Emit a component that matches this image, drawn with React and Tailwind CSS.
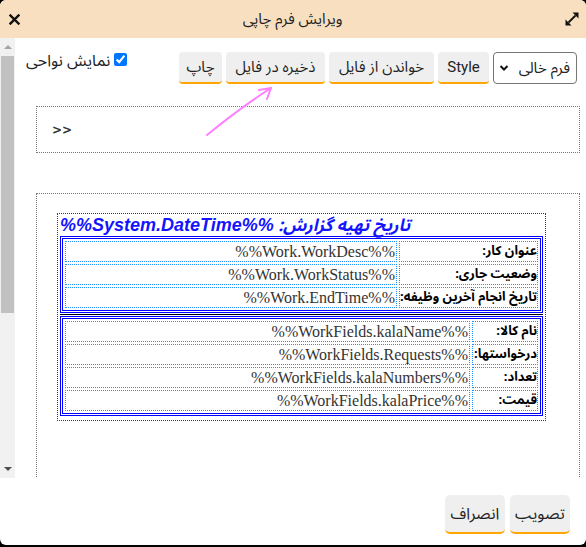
import React from "react";

const fa = { fontFamily: '"Noto Sans Arabic", "Vazirmatn", "DejaVu Sans", sans-serif' };
const serif = { fontFamily: '"Liberation Serif", "DejaVu Serif", serif' };

function Btn({ children, className = "" }) {
  return (
    <div
      className={`h-[32px] px-[9px] flex items-center justify-center bg-[#efefef] rounded-[4px] border-b-[2px] border-[#ffa500] text-[15px] text-[#222] whitespace-nowrap ${className}`}
      style={fa}
    >
      {children}
    </div>
  );
}

function Row({ label, value, labelW }) {
  return (
    <tr>
      <td
        className="border border-dotted border-[#1e90ff] px-0 h-[21px] text-[13px] font-bold text-black whitespace-nowrap leading-none"
        style={{ ...fa, width: labelW }}
      >
        {label}
      </td>
      <td
        className="border border-dotted border-[#1e90ff] px-[1px] h-[21px] text-[16px] text-[#333] text-right leading-none"
        style={serif}
      >
        {value}
      </td>
    </tr>
  );
}

function DataTable({ rows, labelW }) {
  return (
    <div className="border-[3px] border-double border-[#0000ff] p-0">
      <table className="w-full border-separate border-spacing-[2px]">
        <tbody>
          {rows.map((r, i) => (
            <Row key={i} label={r[0]} value={r[1]} labelW={labelW} />
          ))}
        </tbody>
      </table>
    </div>
  );
}

export default function App() {
  return (
    <div className="w-[586px] h-[547px] bg-black overflow-hidden">
      <div className="relative w-[586px] h-[545px] bg-white rounded-[6px] overflow-hidden flex flex-col">
        {/* title bar */}
        <div className="h-[38px] shrink-0 bg-[#f7dfc0] flex items-center justify-between pl-[9px] pr-[7px]">
          <svg width="11" height="11" viewBox="0 0 11 11">
            <path d="M1.5 1.5 L9.5 9.5 M9.5 1.5 L1.5 9.5" stroke="#111" strokeWidth="2.4" strokeLinecap="square" />
          </svg>
          <div className="text-[15px] text-[#222]" style={fa} dir="rtl">
            ویرایش فرم چاپی
          </div>
          <svg width="14" height="14" viewBox="0 0 14 14">
            <path d="M3.5 10.5 L10.5 3.5" stroke="#111" strokeWidth="1.8" />
            <path d="M13.5 0.5 L13.5 6.5 L7.5 0.5 Z" fill="#111" />
            <path d="M0.5 13.5 L0.5 7.5 L6.5 13.5 Z" fill="#111" />
          </svg>
        </div>

        {/* body */}
        <div className="h-[440px] shrink-0 flex">
          {/* scrollbar */}
          <div className="w-[15px] shrink-0 bg-[#f1f1f1] flex flex-col items-center">
            <div className="h-[18px] flex items-center justify-center">
              <div className="w-0 h-0 border-l-[4px] border-r-[4px] border-b-[4px] border-l-transparent border-r-transparent border-b-[#a3a3a3]" />
            </div>
            <div className="w-[13px] h-[257px] bg-[#c1c1c1]" />
            <div className="flex-1" />
            <div className="h-[18px] flex items-center justify-center">
              <div className="w-0 h-0 border-l-[4px] border-r-[4px] border-t-[4px] border-l-transparent border-r-transparent border-t-[#505050]" />
            </div>
          </div>

          {/* content */}
          <div className="flex-1 overflow-hidden" dir="rtl">
            <div className="flex justify-between items-start pt-[14px] pr-[9px] pl-[11px]">
              <div className="flex gap-[4px]">
                <div
                  className="h-[32px] w-[84px] border border-[#767676] rounded-[4px] flex items-center justify-between pr-[6px] pl-[5px] text-[15px] text-[#222]"
                  style={fa}
                >
                  <span>فرم خالی</span>
                  <svg width="10" height="8" viewBox="0 0 10 8">
                    <path d="M1.5 2 L5 5.5 L8.5 2" stroke="#111" strokeWidth="2" fill="none" />
                  </svg>
                </div>
                <Btn className="w-[51px]">
                  <span style={{ fontFamily: '"Roboto", "Liberation Sans", sans-serif' }} className="text-[15px]">
                    Style
                  </span>
                </Btn>
                <Btn className="w-[105px]">خواندن از فایل</Btn>
                <Btn className="w-[99px]">ذخیره در فایل</Btn>
                <Btn className="w-[43px]">چاپ</Btn>
              </div>
              <label className="flex items-start gap-[4px] text-[16px] text-[#222] -mt-[1px]" style={fa}>
                <input type="checkbox" defaultChecked className="w-[13px] h-[13px] mt-[2px] accent-[#0075ff]" />
                <span className="leading-[18px] mt-[1px]">نمایش نواحی</span>
              </label>
            </div>

            {/* box 1 */}
            <div className="mt-[22px] mr-[6px] ml-[21px] h-[47px] border border-dotted border-[#777] flex items-center px-[15px]" dir="ltr">
              <span className="text-[12px] text-[#333] font-bold" style={{ fontFamily: '"DejaVu Sans", sans-serif' }}>
                &gt;&gt;
              </span>
            </div>

            {/* box 2 */}
            <div className="mt-[40px] mr-[6px] ml-[21px] h-[320px] border border-dotted border-[#777] pt-[19px] pl-[20px] pr-[33px]">
              <div className="border border-dotted border-[#006400] px-[2px] pt-[1px] pb-[4px]">
                <div className="flex justify-end">
                  <div
                    className="text-[17px] font-bold italic text-[#1414ff] leading-[20px] whitespace-nowrap"
                    style={{ fontFamily: '"DejaVu Sans", "Liberation Sans", sans-serif' }}
                  >
                    <span style={fa}>تاریخ تهیه گزارش: </span>
                    <span style={{ fontFamily: '"Liberation Sans", sans-serif' }} className="text-[18px]">%%System.DateTime%%</span>
                  </div>
                </div>
                <DataTable
                  labelW="136px"
                  rows={[
                    ["عنوان کار:", "%%Work.WorkDesc%%"],
                    ["وضعیت جاری:", "%%Work.WorkStatus%%"],
                    ["تاریخ انجام آخرین وظیفه:", "%%Work.EndTime%%"],
                  ]}
                />
                <div className="h-[1px] bg-black my-[1px]" />
                <DataTable
                  labelW="66px"
                  rows={[
                    ["نام کالا:", "%%WorkFields.kalaName%%"],
                    ["درخواستها:", "%%WorkFields.Requests%%"],
                    ["تعداد:", "%%WorkFields.kalaNumbers%%"],
                    ["قیمت:", "%%WorkFields.kalaPrice%%"],
                  ]}
                />
              </div>
            </div>
          </div>
        </div>

        {/* footer */}
        <div className="flex-1 flex items-start pt-[17px] pr-[16px]" dir="rtl">
          <div className="flex gap-[5px]">
            <Btn className="h-[39px] w-[60px] text-[16px] rounded-[5px]">تصویب</Btn>
            <Btn className="h-[39px] w-[60px] text-[16px] rounded-[5px]">انصراف</Btn>
          </div>
        </div>

        {/* annotation arrow */}
        <svg className="absolute left-0 top-0 pointer-events-none" width="586" height="547">
          <path d="M207 135 Q240 108 271 88" stroke="#ff80ff" strokeWidth="2" fill="none" strokeLinecap="round" />
          <path d="M271 88 L259 90 M271 88 L267 99" stroke="#ff80ff" strokeWidth="2" fill="none" strokeLinecap="round" />
        </svg>
      </div>
    </div>
  );
}
